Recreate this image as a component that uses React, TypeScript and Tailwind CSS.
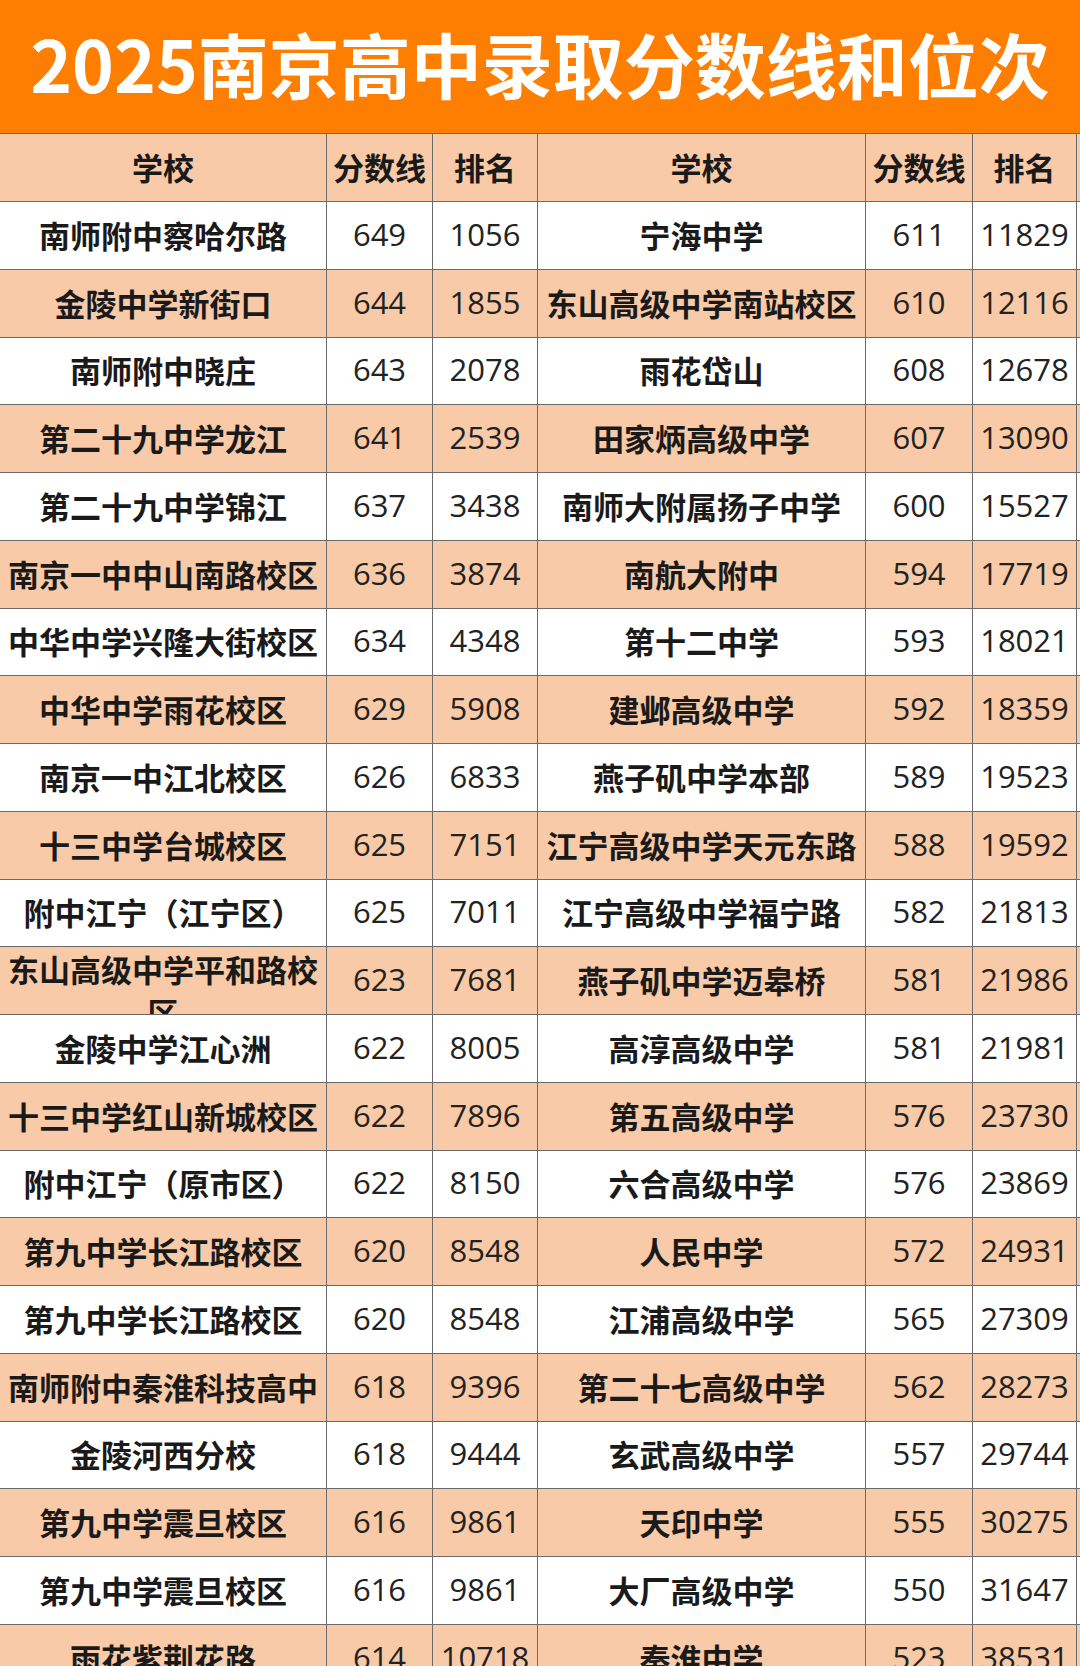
type Row = [string, string, string, string, string, string];

const rows: Row[] = [
  ["南师附中察哈尔路", "649", "1056", "宁海中学", "611", "11829"],
  ["金陵中学新街口", "644", "1855", "东山高级中学南站校区", "610", "12116"],
  ["南师附中晓庄", "643", "2078", "雨花岱山", "608", "12678"],
  ["第二十九中学龙江", "641", "2539", "田家炳高级中学", "607", "13090"],
  ["第二十九中学锦江", "637", "3438", "南师大附属扬子中学", "600", "15527"],
  ["南京一中中山南路校区", "636", "3874", "南航大附中", "594", "17719"],
  ["中华中学兴隆大街校区", "634", "4348", "第十二中学", "593", "18021"],
  ["中华中学雨花校区", "629", "5908", "建邺高级中学", "592", "18359"],
  ["南京一中江北校区", "626", "6833", "燕子矶中学本部", "589", "19523"],
  ["十三中学台城校区", "625", "7151", "江宁高级中学天元东路", "588", "19592"],
  ["附中江宁（江宁区）", "625", "7011", "江宁高级中学福宁路", "582", "21813"],
  ["东山高级中学平和路校区", "623", "7681", "燕子矶中学迈皋桥", "581", "21986"],
  ["金陵中学江心洲", "622", "8005", "高淳高级中学", "581", "21981"],
  ["十三中学红山新城校区", "622", "7896", "第五高级中学", "576", "23730"],
  ["附中江宁（原市区）", "622", "8150", "六合高级中学", "576", "23869"],
  ["第九中学长江路校区", "620", "8548", "人民中学", "572", "24931"],
  ["第九中学长江路校区", "620", "8548", "江浦高级中学", "565", "27309"],
  ["南师附中秦淮科技高中", "618", "9396", "第二十七高级中学", "562", "28273"],
  ["金陵河西分校", "618", "9444", "玄武高级中学", "557", "29744"],
  ["第九中学震旦校区", "616", "9861", "天印中学", "555", "30275"],
  ["第九中学震旦校区", "616", "9861", "大厂高级中学", "550", "31647"],
  ["雨花紫荆花路", "614", "10718", "秦淮中学", "523", "38531"],
];

const cols = "grid grid-cols-[327px_106px_105px_328px_107px_104px] border-b border-[#6a6a6a]";
const cell = "border-r border-[#6a6a6a] flex items-center justify-center overflow-hidden";

function NameCell({ name }: { name: string }) {
  // long names wrap like the spreadsheet: top aligned, second line cut off
  const long = name.length > 10;
  return (
    <div
      className={
        long
          ? "border-r border-[#6a6a6a] flex items-start justify-center overflow-hidden px-[3px]"
          : cell + " px-[3px] pb-[2px]"
      }
    >
      <span
        className={
          "text-center font-bold text-[31px] text-[#1a1a1a] " +
          (long ? "leading-[43px]" : "leading-none whitespace-nowrap")
        }
      >
        {name}
      </span>
    </div>
  );
}

function NumCell({ value }: { value: string }) {
  return (
    <div className={cell + " pb-[2px]"}>
      <span className="font-['Open_Sans','Noto_Sans_CJK_SC',sans-serif] text-[31px] leading-none text-[#222]">
        {value}
      </span>
    </div>
  );
}

function HeadCell({ label }: { label: string }) {
  return (
    <div className={cell + " pb-[2px]"}>
      <span className="font-bold text-[31px] leading-none text-[#1a1a1a] whitespace-nowrap">{label}</span>
    </div>
  );
}

export default function App() {
  return (
    <div className="w-[1080px] h-[1666px] overflow-hidden bg-white font-['Noto_Sans_CJK_SC',sans-serif]">
      <div className="h-[134px] bg-[#fe7e02] flex items-center justify-center border-b border-[#6a6a6a] pb-[8px]">
        <h1 className="text-white font-bold text-[71px] leading-none whitespace-nowrap">
          2025南京高中录取分数线和位次
        </h1>
      </div>

      <div className={cols + " h-[68px] bg-[#f8caa7]"}>
        <HeadCell label="学校" />
        <HeadCell label="分数线" />
        <HeadCell label="排名" />
        <HeadCell label="学校" />
        <HeadCell label="分数线" />
        <HeadCell label="排名" />
      </div>

      {rows.map((r, i) => (
        <div key={i} className={cols + " h-[67.75px] " + (i % 2 === 1 ? "bg-[#f8caa7]" : "bg-white")}>
          <NameCell name={r[0]} />
          <NumCell value={r[1]} />
          <NumCell value={r[2]} />
          <NameCell name={r[3]} />
          <NumCell value={r[4]} />
          <NumCell value={r[5]} />
        </div>
      ))}
    </div>
  );
}
